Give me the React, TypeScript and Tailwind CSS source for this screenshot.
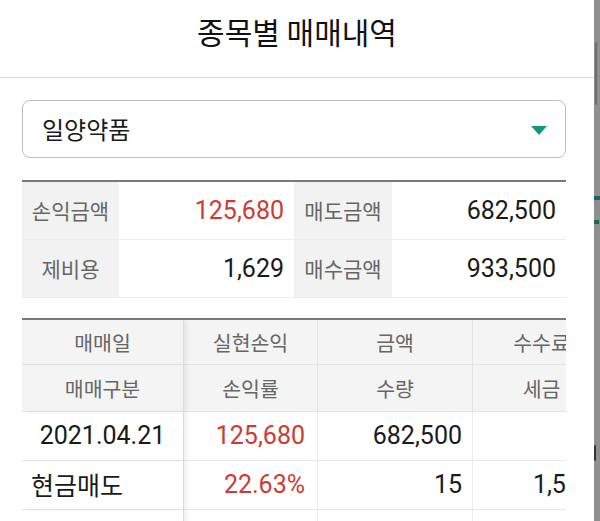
const FONT = "font-['Roboto','Noto_Sans_CJK_KR',sans-serif]";
const KR = "font-['Noto_Sans_CJK_KR',sans-serif]";

const SUMMARY = [
  { l1: '손익금액', v1: '125,680', red: true, l2: '매도금액', v2: '682,500' },
  { l1: '제비용', v1: '1,629', red: false, l2: '매수금액', v2: '933,500' },
];

const FROZEN = 'border-r border-r-[#dcdcdc] shadow-[3px_0_4px_rgba(0,0,0,0.06)] relative';
const HEAD = `bg-[#f4f4f4] border-b border-[#e4e4e4] flex items-center justify-center text-[20.5px] text-[#666] ${KR}`;

export default function App() {
  return (
    <div className={`w-[600px] h-[521px] flex overflow-hidden bg-white text-[#1a1a1a] ${FONT}`}>
      <div className="w-[594px] shrink-0 flex flex-col">
        {/* header */}
        <div className="h-[78px] shrink-0 border-b border-[#dedede] flex items-center justify-center pb-[14px]">
          <h1 className={`text-[30px] text-[#111] ${KR}`}>종목별 매매내역</h1>
        </div>

        <div className="pl-[22px] pr-[28px]">
          {/* stock select */}
          <div className="mt-[22px] h-[58px] rounded-[8px] border-[1.5px] border-[#bdbdbd] flex items-center justify-between pl-[19px] pr-[18px]">
            <span className={`text-[24px] ${KR}`}>일양약품</span>
            <svg width="16" height="9" viewBox="0 0 16 9" className="mt-[2px]">
              <polygon points="0,0 16,0 8,9" fill="#15987a" />
            </svg>
          </div>

          {/* summary */}
          <div className="mt-[22px] border-t-2 border-[#7a7a7a] grid grid-cols-[97px_175px_98px_1fr]">
            {SUMMARY.map((r) => (
              <div key={r.l1} className="contents">
                <div className={`h-[58px] bg-[#f2f2f2] border-b border-[#ededed] flex items-center justify-center text-[21px] text-[#666] ${KR}`}>{r.l1}</div>
                <div className={`h-[58px] border-b border-[#ededed] flex items-center justify-end pr-[10px] text-[25px] ${r.red ? 'text-[#cf3a33]' : ''}`}>{r.v1}</div>
                <div className={`h-[58px] bg-[#f2f2f2] border-b border-[#ededed] flex items-center justify-center text-[21px] text-[#666] ${KR}`}>{r.l2}</div>
                <div className="h-[58px] border-b border-[#ededed] flex items-center justify-end pr-[10px] text-[25px]">{r.v2}</div>
              </div>
            ))}
          </div>

          {/* trade list */}
          <div className="mt-[20px] border-t-2 border-[#7a7a7a] overflow-hidden">
            <div className="w-[588px] grid grid-cols-[162px_133px_155px_138px]">
              {/* header row 1 */}
              <div className={`h-[45px] ${HEAD} ${FROZEN}`}>매매일</div>
              <div className={`h-[45px] ${HEAD}`}>실현손익</div>
              <div className={`h-[45px] ${HEAD} border-l border-l-[#e4e4e4]`}>금액</div>
              <div className={`h-[45px] ${HEAD} border-l border-l-[#e4e4e4]`}>수수료</div>
              {/* header row 2 */}
              <div className={`h-[47px] ${HEAD} ${FROZEN}`}>매매구분</div>
              <div className={`h-[47px] ${HEAD}`}>손익률</div>
              <div className={`h-[47px] ${HEAD} border-l border-l-[#e4e4e4]`}>수량</div>
              <div className={`h-[47px] ${HEAD} border-l border-l-[#e4e4e4]`}>세금</div>
              {/* data row 1 */}
              <div className={`h-[49px] border-b border-[#e8e8e8] ${FROZEN} flex items-center justify-center text-[25px]`}>2021.04.21</div>
              <div className="h-[49px] border-b border-[#e8e8e8] flex items-center justify-end pr-[12px] text-[25px] text-[#cf3a33]">125,680</div>
              <div className="h-[49px] border-b border-[#e8e8e8] border-l border-l-[#ececec] flex items-center justify-end pr-[10px] text-[25px]">682,500</div>
              <div className="h-[49px] border-b border-[#e8e8e8] border-l border-l-[#ececec]" />
              {/* data row 2 */}
              <div className={`h-[49px] border-b border-[#e8e8e8] ${FROZEN} flex items-center pl-[9px] text-[25px] ${KR}`}>현금매도</div>
              <div className="h-[49px] border-b border-[#e8e8e8] flex items-center justify-end pr-[12px] text-[25px] text-[#cf3a33]">22.63%</div>
              <div className="h-[49px] border-b border-[#e8e8e8] border-l border-l-[#ececec] flex items-center justify-end pr-[10px] text-[25px]">15</div>
              <div className="h-[49px] border-b border-[#e8e8e8] border-l border-l-[#ececec] flex items-center justify-end pr-[16px] text-[25px]">1,569</div>
              {/* data row 3 (cut off) */}
              <div className={`h-[49px] ${FROZEN}`} />
              <div className="h-[49px]" />
              <div className="h-[49px] border-l border-l-[#ececec]" />
              <div className="h-[49px] border-l border-l-[#ececec]" />
            </div>
          </div>
        </div>
      </div>

      {/* page behind the sheet */}
      <div className="w-[6px] shrink-0 bg-[#8f8f8f] relative">
        <div className="absolute left-[1px] top-[42px] w-[3px] h-[63px] rounded-l-full border-l-2 border-[#6e6e6e]" />
        <div className="absolute left-0 top-[196px] w-[6px] h-[4px] bg-[#156b57]" />
        <div className="absolute left-0 top-[220px] w-[5px] h-[4px] bg-[#156b57]" />
        <div className="absolute left-0 top-[445px] w-[2px] h-[16px] rounded-l-full border-l-2 border-[#333]" />
      </div>
    </div>
  );
}
